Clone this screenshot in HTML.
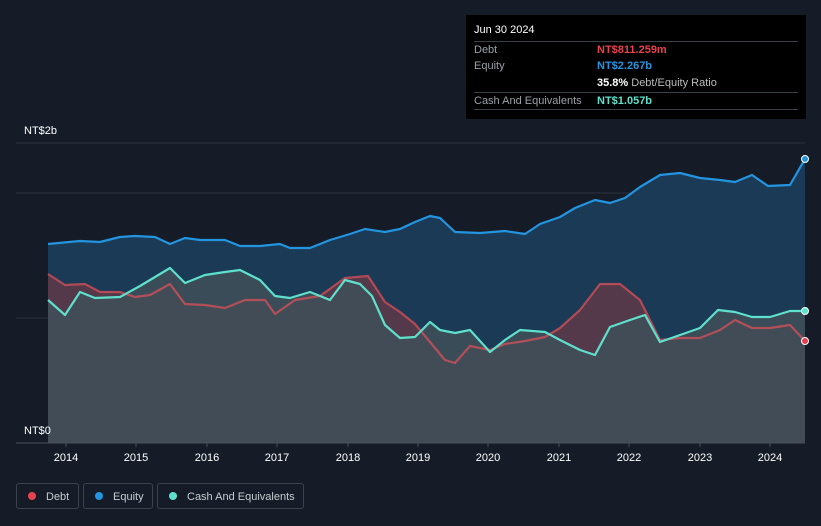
<!DOCTYPE html>
<html><head><style>
body{margin:0;width:821px;height:526px;background:#151c27;font-family:"Liberation Sans",sans-serif;overflow:hidden;position:relative}
.tt{position:absolute;left:466px;top:15px;width:340px;height:104px;background:#000;color:#fff;font-size:11px}
.r{position:absolute;left:8px;right:8px;border-top:1px solid #3a3f46;height:17px;line-height:17px}
.l{color:#9aa0a6}
.v{position:absolute;left:123px;top:0;font-weight:bold}
.ax{position:absolute;color:#fff;font-size:11px}
.lg{position:absolute;top:483px;height:26px;border:1px solid #3c434d;border-radius:3px;color:#c8ccd0;font-size:11px;line-height:26px;box-sizing:border-box}
.dot{display:inline-block;width:8px;height:8px;border-radius:50%;margin:0 10px 0 11px;vertical-align:-0px}
</style></head><body>
<svg width="821" height="526" style="position:absolute;left:0;top:0">
<line x1="16" y1="143" x2="805" y2="143" stroke="#2b323c"/>
<line x1="16" y1="193" x2="805" y2="193" stroke="#2b323c"/>
<line x1="16" y1="318" x2="805" y2="318" stroke="#2b323c"/>
<polygon fill="#1b3a55" points="48,443 48,244 80,241 100,242 120,237 135,236 155,237 170,244 185,238 200,240 225,240 240,246 260,246 280,244 290,248 310,248 330,240 350,234 365,229 385,232 400,229 415,222 430,216 440,218 455,232 480,233 505,231 525,234 540,224 560,217 575,208 595,200 610,203 625,198 640,187 660,175 680,173 700,178 720,180 735,182 752,175 768,186 790,185 805,159 805,443"/>
<polygon fill="#5a3a48" fill-opacity="0.9" points="48,443 48,274 65,285 85,284 100,292 120,292 135,297 150,295 170,284 185,304 205,305 225,308 245,300 265,300 275,314 295,300 320,296 345,278 368,276 385,302 400,312 415,324 430,342 445,360 455,363 470,346 490,350 505,344 525,341 545,337 560,328 580,310 600,284 620,284 640,300 660,340 680,338 700,338 720,330 735,320 752,328 770,328 790,325 805,341 805,443"/>
<polygon fill="#3f5058" fill-opacity="0.85" points="48,443 48,300 65,315 80,292 95,298 120,297 140,286 155,277 170,268 185,283 205,275 225,272 240,270 260,280 275,296 290,298 310,292 330,300 345,280 360,284 372,296 385,325 400,338 415,337 430,322 440,330 455,333 470,330 490,352 505,340 520,330 545,332 560,340 580,350 595,355 610,327 630,320 645,315 660,342 680,335 700,328 718,310 735,312 752,317 770,317 790,311 805,311 805,443"/>
<g fill="none" stroke-width="2.2" stroke-linejoin="round">
<polyline stroke="#2394df" points="48,244 80,241 100,242 120,237 135,236 155,237 170,244 185,238 200,240 225,240 240,246 260,246 280,244 290,248 310,248 330,240 350,234 365,229 385,232 400,229 415,222 430,216 440,218 455,232 480,233 505,231 525,234 540,224 560,217 575,208 595,200 610,203 625,198 640,187 660,175 680,173 700,178 720,180 735,182 752,175 768,186 790,185 805,159"/>
<polyline stroke="#d9505a" stroke-opacity="0.75" points="48,274 65,285 85,284 100,292 120,292 135,297 150,295 170,284 185,304 205,305 225,308 245,300 265,300 275,314 295,300 320,296 345,278 368,276 385,302 400,312 415,324 430,342 445,360 455,363 470,346 490,350 505,344 525,341 545,337 560,328 580,310 600,284 620,284 640,300 660,340 680,338 700,338 720,330 735,320 752,328 770,328 790,325 805,341"/>
<polyline stroke="#5ee0cc" points="48,300 65,315 80,292 95,298 120,297 140,286 155,277 170,268 185,283 205,275 225,272 240,270 260,280 275,296 290,298 310,292 330,300 345,280 360,284 372,296 385,325 400,338 415,337 430,322 440,330 455,333 470,330 490,352 505,340 520,330 545,332 560,340 580,350 595,355 610,327 630,320 645,315 660,342 680,335 700,328 718,310 735,312 752,317 770,317 790,311 805,311"/>
</g>
<circle cx="805" cy="159" r="3.5" fill="#2394df" stroke="#fff" stroke-width="1"/>
<circle cx="805" cy="341" r="3.5" fill="#e04050" stroke="#fff" stroke-width="1"/>
<circle cx="805" cy="311" r="3.5" fill="#5ee0cc" stroke="#fff" stroke-width="1"/>
<line x1="16" y1="443" x2="805" y2="443" stroke="#4a515b"/>
<g stroke="#4a515b"><line x1="66" y1="443" x2="66" y2="447"/><line x1="136" y1="443" x2="136" y2="447"/><line x1="207" y1="443" x2="207" y2="447"/><line x1="277" y1="443" x2="277" y2="447"/><line x1="348" y1="443" x2="348" y2="447"/><line x1="418" y1="443" x2="418" y2="447"/><line x1="488" y1="443" x2="488" y2="447"/><line x1="559" y1="443" x2="559" y2="447"/><line x1="629" y1="443" x2="629" y2="447"/><line x1="700" y1="443" x2="700" y2="447"/><line x1="770" y1="443" x2="770" y2="447"/></g>
<g fill="#fff" font-size="11" text-anchor="middle" font-family="Liberation Sans"><text x="66" y="461">2014</text><text x="136" y="461">2015</text><text x="207" y="461">2016</text><text x="277" y="461">2017</text><text x="348" y="461">2018</text><text x="418" y="461">2019</text><text x="488" y="461">2020</text><text x="559" y="461">2021</text><text x="629" y="461">2022</text><text x="700" y="461">2023</text><text x="770" y="461">2024</text></g>
</svg>
<div class="ax" style="left:24px;top:125px">NT$2b</div>
<div class="ax" style="left:24px;top:425px">NT$0</div>
<div class="tt">
<div style="position:absolute;left:8px;top:9px;font-size:11px">Jun 30 2024</div>
<div class="r" style="top:26px"><span class="l">Debt</span><span class="v" style="color:#e8414f">NT$811.259m</span></div>
<div class="r" style="top:43px;border-top:none"><span class="l">Equity</span><span class="v" style="color:#2394df">NT$2.267b</span></div>
<div class="r" style="top:60px;border-top:none"><span class="v" style="color:#fff">35.8% <span style="font-weight:normal;color:#bbb">Debt/Equity Ratio</span></span></div>
<div class="r" style="top:77px"><span class="l">Cash And Equivalents</span><span class="v" style="color:#5ee0cc">NT$1.057b</span></div>
<div class="r" style="top:94px;height:0"></div>
</div>
<div class="lg" style="left:16px;width:63px"><span class="dot" style="background:#e8414f"></span>Debt</div>
<div class="lg" style="left:83px;width:70px"><span class="dot" style="background:#2394df"></span>Equity</div>
<div class="lg" style="left:157px;width:147px"><span class="dot" style="background:#5ee0cc"></span>Cash And Equivalents</div>
</body></html>
